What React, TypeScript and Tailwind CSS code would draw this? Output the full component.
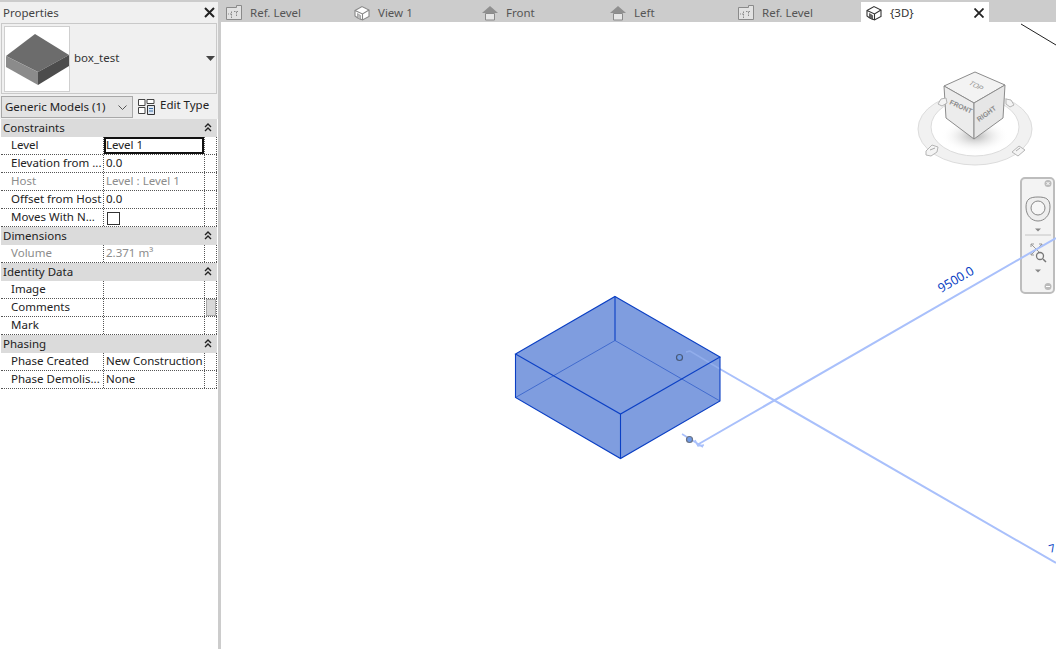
import React from 'react';

const PlanIcon = () => (
  <svg width="16" height="16" viewBox="0 0 16 16" fill="none" stroke="#8a8a8a">
    <path d="M.5 2.500h10v-2h5v14H.5z" fill="#e2e2e2" />
    <path d="M5.500 6.500v8M5.500 9H2M8 6.500h5M10.500 7v5" strokeDasharray="1.500 1" />
  </svg>
);

const HouseIcon = ({ dark }: { dark?: boolean }) => {
  const c = dark ? '#333' : '#888';
  return (
    <svg width="16" height="16" viewBox="0 0 16 16" fill="none" stroke={c} strokeWidth="1.100">
      <path d="M1 5.500 8 1.500l7 3.500v6.500l-6.500 3.500L3 12.500 1 11z" fill="#fff" />
      <path d="M1 5.500 8.500 9l6.500-4M8.500 9v6" />
      <path d="M3.500 8.500v4.500l3 1.500V10.500z" fill={dark ? '#666' : '#bbb'} strokeWidth=".6" />
    </svg>
  );
};

const ElevationIcon = () => (
  <svg width="16" height="16" viewBox="0 0 16 16">
    <path d="M8 1 16 8H0z" fill="#8f8f8f" />
    <path d="M3.500 8.500h9v6.500h-9z" fill="#e6e6e6" stroke="#8a8a8a" />
  </svg>
);

const tabs = [
  { label: 'Ref. Level', icon: <PlanIcon /> },
  { label: 'View 1', icon: <HouseIcon /> },
  { label: 'Front', icon: <ElevationIcon /> },
  { label: 'Left', icon: <ElevationIcon /> },
  { label: 'Ref. Level', icon: <PlanIcon /> },
];

type Row = { name: string; value?: string; muted?: boolean; check?: boolean; active?: boolean; thumb?: boolean };
type Group = { title: string; rows: Row[] };

const groups: Group[] = [
  {
    title: 'Constraints',
    rows: [
      { name: 'Level', value: 'Level 1', active: true },
      { name: 'Elevation from ...', value: '0.0' },
      { name: 'Host', value: 'Level : Level 1', muted: true },
      { name: 'Offset from Host', value: '0.0' },
      { name: 'Moves With N...', check: true },
    ],
  },
  { title: 'Dimensions', rows: [{ name: 'Volume', value: '2.371 m³', muted: true }] },
  {
    title: 'Identity Data',
    rows: [{ name: 'Image' }, { name: 'Comments', thumb: true }, { name: 'Mark' }],
  },
  {
    title: 'Phasing',
    rows: [
      { name: 'Phase Created', value: 'New Construction' },
      { name: 'Phase Demolis...', value: 'None' },
    ],
  },
];

const Chevrons = () => (
  <svg width="8" height="9" viewBox="0 0 8 9" fill="none" stroke="#222" strokeWidth="1.400">
    <path d="M1 4 4 1l3 3M1 8l3-3 3 3" />
  </svg>
);

const PropertyRow = ({ row }: { row: Row }) => (
  <div className={`flex h-[18px] border-b border-dotted border-[#555] bg-white leading-[15px] ${row.muted ? 'text-[#8c8c8c]' : 'text-[#222]'}`}>
    <div className="w-[103px] shrink-0 overflow-hidden whitespace-nowrap border-r border-dotted border-[#555] pl-[10px]">{row.name}</div>
    <div className="w-[101px] shrink-0 overflow-hidden whitespace-nowrap border-r border-dotted border-[#555]">
      {row.active ? (
        <div className="h-[17px] border-2 border-[#111] bg-white leading-[12px]">{row.value}</div>
      ) : row.check ? (
        <div className="ml-[3px] mt-[3px] size-[13px] border border-[#333] bg-white" />
      ) : (
        <span className="pl-[2px]">{row.value}</span>
      )}
    </div>
    <div className="flex flex-1 justify-end border-r border-dotted border-[#555]">
      {row.thumb && <div className="h-[17px] w-[10px] border border-[#aaa] bg-[#d8d8d8]" />}
    </div>
  </div>
);

const PropertiesPanel = () => (
  <aside className="flex h-full w-[218px] shrink-0 flex-col bg-[#f0f0f0] text-[11.5px] text-[#222]">
    <div className="flex h-[21px] items-center justify-between pl-[3px] pr-[3px]">
      <span className="text-[#444]">Properties</span>
      <svg width="11" height="11" viewBox="0 0 11 11" stroke="#222" strokeWidth="2">
        <path d="M1 1l9 9M10 1l-9 9" />
      </svg>
    </div>
    <div className="mx-px flex h-[71px] items-center border border-[#c9c9c9] pl-[2px]">
      <div className="flex size-[66px] items-center justify-center border border-[#cfcfcf] bg-white">
        <svg width="64" height="64" viewBox="4 25 64 64">
          <path d="M34 32 68 53 37 70 5 54z" fill="#6c6c6c" />
          <path d="M5 54 37 70v13L5 65z" fill="#8b8b8b" />
          <path d="M37 70 68 53v11L37 83z" fill="#4c4c4c" />
        </svg>
      </div>
      <span className="ml-[4px] -mt-[1px] text-[#333]">box_test</span>
      <svg className="ml-auto mr-[1px]" width="9" height="5" viewBox="0 0 9 5">
        <path d="M0 0h9L4.500 5z" fill="#444" />
      </svg>
    </div>
    <div className="mt-[2px] flex h-[22px] items-center">
      <div className="ml-px flex h-[22px] w-[132px] items-center justify-between border border-[#a8a8a8] bg-[#e3e3e3] pl-[3px] pr-[5px]">
        <span>Generic Models (1)</span>
        <svg width="9" height="5" viewBox="0 0 9 5" fill="none" stroke="#555">
          <path d="M.5.5l4 4 4-4" />
        </svg>
      </div>
      <svg className="ml-[5px] -mt-[2px]" width="17" height="17" viewBox="0 0 17 17" fill="#fff" stroke="#444">
        <path d="M.5 1.500h6.500v6H.500zM9 1.500h7v4H9zM.5 9.500h6.500v6H.5z" />
        <path d="M9.500 7.500h7v9h-7z" fill="#dfe7f2" stroke="#333" />
        <path d="M11 10.500h4M11 13h4" stroke="#3a6ea5" />
      </svg>
      <span className="ml-[5px] -mt-[4px]">Edit Type</span>
    </div>
    <div className="mt-px flex-1 bg-white pl-px pr-px">
      {groups.map((g) => (
        <div key={g.title}>
          <div className="flex h-[18px] items-center justify-between bg-[#dbdbdb] pb-px pl-[2px] pr-[5px]">
            <span>{g.title}</span>
            <Chevrons />
          </div>
          {g.rows.map((r) => (
            <PropertyRow key={r.name} row={r} />
          ))}
        </div>
      ))}
    </div>
  </aside>
);

const ViewCube = () => (
  <svg className="absolute left-[693px] top-[48px]" width="120" height="100" viewBox="914 70 120 100">
    <defs>
      <radialGradient id="cubeShadow">
        <stop offset="0" stopColor="#999" stopOpacity=".75" />
        <stop offset="1" stopColor="#fff" stopOpacity="0" />
      </radialGradient>
    </defs>
    <path fillRule="evenodd" d="M918 129a57 36 0 1 0 114 0a57 36 0 1 0-114 0zM931 127a44 29 0 1 0 88 0a44 29 0 1 0-88 0z" fill="#f1f1f1" stroke="#dcdcdc" />
    <ellipse cx="975" cy="136" rx="34" ry="17" fill="url(#cubeShadow)" />
    <path d="M975 72 1005 85 974 103 944 86z" fill="#f3f3f3" stroke="#8c8c8c" />
    <path d="M944 86 974 103v36L946 118z" fill="#ececec" stroke="#8c8c8c" />
    <path d="M974 103 1005 85 1003 118 974 139z" fill="#e6e6e6" stroke="#8c8c8c" />
    <text transform="translate(968 84) rotate(28) skewX(-20)" fontSize="7" fontFamily="Liberation Sans" fill="#999">TOP</text>
    <text transform="translate(949 104) rotate(24)" fontSize="7" fontWeight="bold" fontFamily="Liberation Sans" fill="#8c8c8c">FRONT</text>
    <text transform="translate(979 122) rotate(-36)" fontSize="7" fontWeight="bold" fontFamily="Liberation Sans" fill="#8c8c8c">RIGHT</text>
    <g fill="#f4f4f4" stroke="#b5b5b5">
      <path d="M938 104l3-5 5-1 1 5-5 3z" />
      <path d="M1006 99l5 1 3 5-4 2-4-3z" />
      <path d="M926 151l6-6 6 2-1 5-6 4-5-1z" />
      <path d="M1012 152l7-6 6 4-7 6z" />
    </g>
    <path d="M930 150l5-2M1016 151l4-3" stroke="#aaa" />
  </svg>
);

const NavBar = () => (
  <div className="absolute left-[799px] top-[155px] h-[117px] w-[35px] rounded-[5px] border-2 border-[#bdbdbd] bg-[#f3f3f3]">
    <svg width="31" height="113" viewBox="1021 178 31 113" fill="none">
      <circle cx="1047" cy="182.500" r="3.500" fill="#bbb" />
      <path d="M1045.500 181l3 3M1048.500 181l-3 3" stroke="#fff" />
      <path d="M1037 196c8 0 12 2 12 10 0 9-6 14-12 14s-12-5-12-14c0-8 4-10 12-10z" fill="#eee" stroke="#888" />
      <circle cx="1037" cy="207" r="7" fill="#f6f6f6" stroke="#888" />
      <path d="M1034 227.500h6l-3 3z" fill="#888" />
      <path d="M1024 234h26" stroke="#c4c4c4" />
      <path d="M1030 243l11 11M1041 243l-11 11M1030 243h3M1030 243v3M1041 243h-3M1041 243v3M1030 254v-3M1030 254h3" stroke="#999" />
      <circle cx="1039" cy="255" r="3.500" fill="#f3f3f3" stroke="#777" strokeWidth="1.300" />
      <path d="M1042 258l3 3" stroke="#777" strokeWidth="1.500" />
      <path d="M1034 268.500h6l-3 3z" fill="#888" />
      <circle cx="1047" cy="285.500" r="3.500" fill="#bbb" />
      <path d="M1045 285.500h4" stroke="#fff" />
    </svg>
  </div>
);

const ModelDrawing = () => (
  <svg className="absolute left-0 top-0" width="835" height="627" viewBox="221 22 835 627" fill="none">
    <path d="M1021 24 1056 45" stroke="#222" />
    <g stroke="#a9c0fb" strokeWidth="2">
      <path d="M720 369 1056 563" />
      <path d="M697 445 1056 238" />
      <path d="M682 434 703 447" strokeWidth="1.500" />
      <path d="M695 440l3 6 6-1" strokeWidth="1.500" />
    </g>
    <path d="M615 296.500 720 357 620.500 414 515.500 354z" fill="#7f9ddf" />
    <path d="M515.500 354 620.500 414v44.500L515.500 397.500z" fill="#7f9ddf" />
    <path d="M620.500 414 720 357v44l-99.500 57.500z" fill="#7f9ddf" />
    <path d="M686 352l4-1 30 18" stroke="#a9c0fb" strokeWidth="1.500" opacity=".45" />
    <path d="M615 340.500 515.500 397.500M615 340.500 720 401" stroke="#3a65cc" strokeWidth=".9" />
    <g stroke="#0a3fc4" strokeWidth="1.100">
      <path d="M615 296.500 720 357 620.500 414 515.500 354z" />
      <path d="M515.500 354v43.500l105 61 99.500-57.500v-44M620.500 414v44.500M615 296.500v44" />
    </g>
    <circle cx="679.500" cy="357.500" r="3" fill="#6f9be8" stroke="#4a5a78" strokeWidth="1.200" />
    <circle cx="689.500" cy="439.500" r="3" fill="#6f9be8" stroke="#6a7284" strokeWidth="1.200" />
    <text transform="translate(941 293) rotate(-30)" fontSize="12.500" fontFamily="Noto Sans" fill="#0a3fc4">9500.0</text>
    <text transform="translate(1050 553) rotate(-15)" fontSize="11" fontFamily="Noto Sans" fill="#0a3fc4">7</text>
  </svg>
);

export default function App() {
  return (
    <div className="flex h-screen w-full overflow-hidden bg-[#cccccc] pt-[2px] font-['Noto_Sans',sans-serif] text-[12px]">
      <PropertiesPanel />
      <div className="ml-[3px] flex min-w-0 flex-1 flex-col">
        <div className="flex h-[20px] shrink-0 items-center text-[11.5px] text-[#555]">
          {tabs.map((t, i) => (
            <div key={i} className="flex h-full w-[128px] items-center gap-2 pl-[5px] pt-[2px]">
              {t.icon}
              <span>{t.label}</span>
            </div>
          ))}
          <div className="flex h-full w-[128px] items-center gap-2 bg-white pl-[5px] pr-[4px] pt-[2px] text-[#333]">
            <HouseIcon dark />
            <span>{'{3D}'}</span>
            <svg className="ml-auto mr-[1px]" width="10" height="10" viewBox="0 0 10 10" stroke="#222" strokeWidth="1.800">
              <path d="M.5.5l9 9M9.500.5l-9 9" />
            </svg>
          </div>
        </div>
        <main className="relative flex-1 bg-white">
          <ViewCube />
          <NavBar />
          <ModelDrawing />
        </main>
      </div>
    </div>
  );
}
